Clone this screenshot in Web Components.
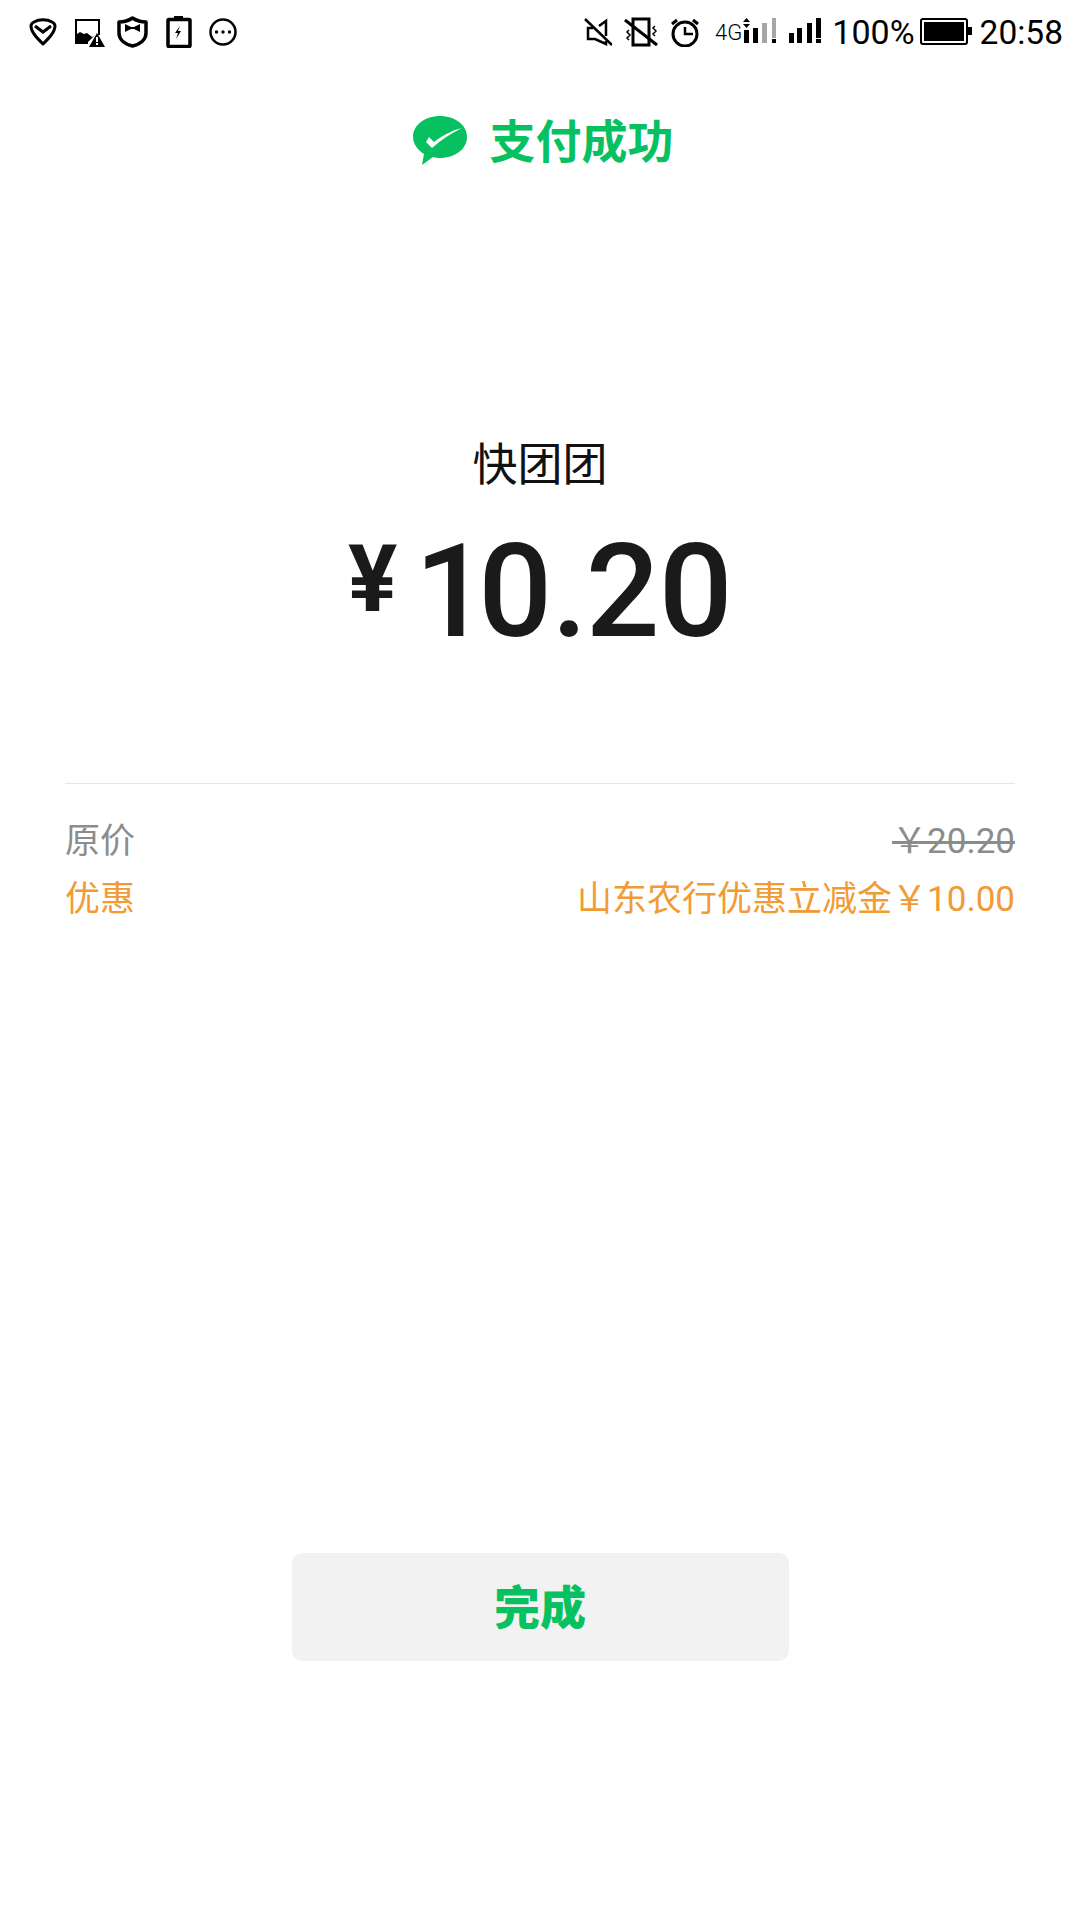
<!DOCTYPE html>
<html lang="zh">
<head>
<meta charset="utf-8">
<title>支付成功</title>
<style>
    html, body { margin: 0; padding: 0; background: #fff; }
    body { width: 1080px; height: 1920px; overflow: hidden; font-family: Roboto, "Noto Sans CJK SC", sans-serif; }
</style>
</head>
<body>
<pay-page>
    <status-bar slot="status"></status-bar>
    <pay-header slot="header">支付成功</pay-header>
    <pay-amount slot="amount" merchant="快团团" value="10.20"></pay-amount>
    <price-row slot="rows" label="原价" value="￥20.20" struck></price-row>
    <price-row slot="rows" label="优惠" value="山东农行优惠立减金￥10.00" accent></price-row>
    <done-button slot="button">完成</done-button>
</pay-page>
<script>
class PayPage extends HTMLElement {
    constructor() {
        super();
        this.attachShadow({ mode: "open" }).innerHTML = /*html*/`
            <style>
                :host { display: flex; flex-direction: column; width: 1080px; height: 1920px; }
                .rows { margin: 0 65px; padding-top: 34px; border-top: 1px solid #e6e6e6; display: flex; flex-direction: column; gap: 10px; }
                .button { display: flex; justify-content: center; margin-top: 629px; }
            </style>
            <slot name="status"></slot>
            <slot name="header"></slot>
            <slot name="amount"></slot>
            <div class="rows"><slot name="rows"></slot></div>
            <div class="button"><slot name="button"></slot></div>
        `;
    }
}

class StatusBar extends HTMLElement {
    constructor() {
        super();
        this.attachShadow({ mode: "open" }).innerHTML = /*html*/`
            <style>
                :host { display: flex; align-items: center; height: 64px; padding: 0 17px 0 29px; color: #000; font-family: Roboto, sans-serif; }
                svg { display: block; fill: none; stroke: #000; stroke-width: 3; flex: none; }
                .left { display: flex; align-items: center; gap: 17px; }
                .right { display: flex; align-items: center; margin-left: auto; }
                .net { font-size: 22px; font-weight: 300; margin-left: 15px; }
                .pct { font-size: 34px; margin-left: 10px; }
                .time { font-size: 33.500px; margin-left: 8px; }
                .k { fill: #000; stroke: none; }
                .g { fill: #a6a6a6; stroke: none; }
            </style>
            <div class="left">
                <svg width="28" height="28" viewBox="0 0 28 28"><path stroke-linejoin="round" d="M14 26C8 20 2 14 2 8c0-2 1-3 3-4 5-3 13-3 18 0 2 1 3 2 3 4 0 6-6 12-12 18Z"/><path d="M6 8l8 6 8-6"/></svg>
                <svg width="31" height="32" viewBox="0 0 31 32"><path stroke-width="2" d="M14 27H2V4h23v15"/><path class="k" d="M3 26v-8l3-2 4 2 3-1 5 4 2-1-6 6Z"/><path class="k" d="M23 17l8 14H15Z"/><path stroke="#fff" stroke-width="2" d="M23 21v5m0 1v2"/></svg>
                <svg width="31" height="32" viewBox="0 0 31 32" style="margin-left:-5px"><path stroke-width="3.500" stroke-linejoin="round" d="M15.500 2C20 5 24 6 29 6v11c0 6-5 11-13.500 13C7 28 2 23 2 17V6c5 0 9-1 13.500-4Z"/><path class="k" d="M8 8l6 3h3l6-3v8l-6-3h-3l-6 3Z"/></svg>
                <svg width="27" height="32" viewBox="0 0 27 32"><rect x="3" y="3.500" width="22" height="27" rx="1" stroke-width="3.500"/><rect class="k" x="9" y="0" width="9" height="3"/><path class="k" d="M15 10l-5 7h3l-2 6 5-8h-3l2-5Z"/></svg>
                <svg width="28" height="28" viewBox="0 0 28 28"><circle cx="14" cy="14" r="12.500" stroke-width="2.500"/><circle class="k" cx="7.500" cy="14" r="1.700"/><circle class="k" cx="14" cy="14" r="1.700"/><circle class="k" cx="20.500" cy="14" r="1.700"/></svg>
            </div>
            <div class="right">
                <svg width="28" height="28" viewBox="0 0 28 28"><path stroke-width="2.500" d="M15 8l7-5v15M9 10H4v11h7l11 5v-3"/><path stroke-width="2.500" d="M1 1l27 26"/></svg>
                <svg width="34" height="30" viewBox="0 0 34 30" style="margin-left:12px"><path d="M9 2h16v26H9Z"/><path d="M1 3l32 25" /><path stroke-width="1.500" d="M5 13l-2 2 3 3-3 3 2 2M31 9l-2 2 3 3-3 3 2 2"/></svg>
                <svg width="30" height="30" viewBox="0 0 30 30" style="margin-left:12px"><circle cx="15" cy="17" r="12"/><path stroke-width="2.500" d="M15 10v7h8"/><path stroke-width="3" d="M2 7l5-4M28 7l-5-4"/></svg>
                <span class="net">4G</span>
                <svg width="36" height="28" viewBox="0 0 36 28"><path class="k" d="M2 12h5v13H2ZM11 10h5v15h-5Z"/><path class="g" d="M20 5h5v20h-5ZM30 0h4v20h-4Z"/><path class="k" d="M30 21h4v4h-4ZM1 4l3.500-4L8 4ZM1 6h7l-3.500 4Z"/></svg>
                <svg width="33" height="28" viewBox="0 0 33 28" style="margin-left:11px"><path class="k" d="M0 15h5v10H0ZM8 10h5v15H8ZM18 5h5v20h-5ZM27 0h5v20h-5ZM27 21h5v4h-5Z"/></svg>
                <span class="pct">100%</span>
                <svg width="52" height="28" viewBox="0 0 52 28" style="margin-left:5px"><rect x="1" y="1" width="46" height="25" rx="2" stroke-width="2"/><rect class="k" x="4" y="4" width="40" height="19"/><rect class="k" x="48" y="9" width="4" height="8"/></svg>
                <span class="time">20:58</span>
            </div>
        `;
    }
}

class PayHeader extends HTMLElement {
    constructor() {
        super();
        this.attachShadow({ mode: "open" }).innerHTML = /*html*/`
            <style>
                :host { display: flex; align-items: center; justify-content: center; gap: 22px; height: 78px; margin-top: 35px; padding-left: 5px; color: #07c160; font: 700 46px "Noto Sans CJK SC", sans-serif; }
                svg { display: block; margin-top: 6px; }
            </style>
            <svg width="56" height="52" viewBox="0 0 56 52">
                <path fill="#07c160" d="M28 1c15 0 27 9 27 21S43 43 28 43c-2 0-5-.3-7-1L10 50l2-11C6 35 1 29 1 22 1 10 13 1 28 1Z"/>
                <path fill="#fff" d="M14 27l3-5 5 5c8-6 16-11 28-14-10 5-20 11-30 20Z"/>
            </svg>
            <slot></slot>
        `;
    }
}

class PayAmount extends HTMLElement {
    constructor() {
        super();
        const merchant = this.getAttribute("merchant");
        const value = this.getAttribute("value");
        this.attachShadow({ mode: "open" }).innerHTML = /*html*/`
            <style>
                :host { display: flex; flex-direction: column; align-items: center; height: 606px; box-sizing: border-box; padding-top: 255px; color: #111; }
                .merchant { font: 400 45px/60px "Noto Sans CJK SC", sans-serif; }
                .sum { display: flex; align-items: flex-start; margin-top: 25px; color: #1a1a1a; font-family: Roboto, sans-serif; }
                .yen { font: 700 92px/1 Roboto, sans-serif; margin-top: 17px; margin-right: 22px; }
                .val { font-size: 130px; font-weight: 500; line-height: 150px; letter-spacing: -2px; font-variant-numeric: proportional-nums; }
            </style>
            <div class="merchant">${merchant}</div>
            <div class="sum"><span class="yen">¥</span><span class="val">${value}</span></div>
        `;
    }
}

class PriceRow extends HTMLElement {
    constructor() {
        super();
        const struck = this.hasAttribute("struck");
        this.attachShadow({ mode: "open" }).innerHTML = /*html*/`
            <style>
                :host { display: flex; justify-content: space-between; height: 48px; line-height: 48px; font-size: 35px; font-family: Roboto, "Noto Sans CJK SC", sans-serif; color: #8c8c8c; }
                :host([accent]) { color: #f19b36; }
                .struck { text-decoration: line-through; }
            </style>
            <span>${this.getAttribute("label")}</span>
            <span class="${struck ? "struck" : ""}">${this.getAttribute("value")}</span>
        `;
    }
}

class DoneButton extends HTMLElement {
    constructor() {
        super();
        this.attachShadow({ mode: "open" }).innerHTML = /*html*/`
            <style>
                :host { display: flex; align-items: center; justify-content: center; box-sizing: border-box; width: 497px; height: 108px; padding-bottom: 6px; border-radius: 10px; background: #f2f2f2; color: #07c160; font: 900 46px "Noto Sans CJK SC", sans-serif; }
            </style>
            <slot></slot>
        `;
    }
}

customElements.define("pay-page", PayPage);
customElements.define("status-bar", StatusBar);
customElements.define("pay-header", PayHeader);
customElements.define("pay-amount", PayAmount);
customElements.define("price-row", PriceRow);
customElements.define("done-button", DoneButton);
</script>
</body>
</html>
